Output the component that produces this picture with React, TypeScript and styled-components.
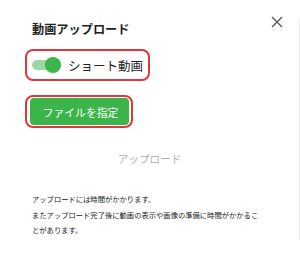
import React from 'react'
import styled, { createGlobalStyle } from 'styled-components'

const GlobalStyle = createGlobalStyle`
    html, body {
        margin: 0;
        padding: 0;
        background: #ffffff;
    }
    body {
        font-family: "Noto Sans CJK JP", "Noto Sans", sans-serif;
        color: #222222;
    }
`

const Page = styled.div`
    width: 300px;
    height: 259px;
    background: #ffffff;
    overflow: hidden;
`

const Panel = styled.div`
    box-sizing: border-box;
    margin-top: 18px;
    height: 222px;
    padding: 3px 16px 0 32px;
    border-right: 1px solid #ededed;
`

const Header = styled.div`
    display: flex;
    justify-content: space-between;
    align-items: flex-start;
`

const Title = styled.h2`
    margin: 0;
    font-size: 12.2px;
    line-height: 16px;
    font-weight: 700;
    color: #222222;
`

const CloseButton = styled.button`
    display: flex;
    padding: 0;
    margin-top: -5px;
    border: none;
    background: none;
    cursor: pointer;
`

const Highlight = styled.div<{ $width: number; $top: number }>`
    box-sizing: border-box;
    width: ${p => p.$width}px;
    margin: ${p => p.$top}px 0 0 -7px;
    border: 2px solid #e2363b;
    border-radius: 8px;
    display: flex;
    align-items: center;
`

const ToggleRow = styled.label`
    display: flex;
    align-items: center;
    gap: 10px;
    height: 28px;
    padding-left: 5px;
    font-size: 12.5px;
    color: #222222;
    cursor: pointer;
`

const Track = styled.span<{ $on: boolean }>`
    position: relative;
    display: block;
    width: 26px;
    height: 10px;
    border-radius: 5px;
    background: ${p => (p.$on ? '#9bd8a3' : '#cccccc')};
`

const Knob = styled.span<{ $on: boolean }>`
    position: absolute;
    top: -3px;
    left: ${p => (p.$on ? '13px' : '-2px')};
    width: 16px;
    height: 16px;
    border-radius: 50%;
    background: ${p => (p.$on ? '#3bb54a' : '#f5f5f5')};
`

const FileButton = styled.button`
    margin: 1px 0 1px 3px;
    width: 99px;
    height: 27px;
    border: none;
    border-radius: 4px;
    background: #3bb54a;
    color: #ffffff;
    font-family: "Noto Sans CJK JP", sans-serif;
    font-size: 10.8px;
    padding: 0 0 0 2px;
    cursor: pointer;
`

const UploadLabel = styled.div`
    margin: 23px 0 0 -16px;
    text-align: center;
    font-size: 10.6px;
    line-height: 16px;
    color: #b0b0b0;
`

const Notes = styled.p`
    margin: 25px 0 0;
    width: 232px;
    font-size: 7.3px;
    line-height: 15.5px;
    color: #222222;
`

export default function App() {
    const [shortVideo, setShortVideo] = React.useState(true)

    return (
        <Page>
            <GlobalStyle />
            <Panel>
                <Header>
                    <Title>動画アップロード</Title>
                    <CloseButton aria-label="閉じる">
                        <svg width="12" height="12" viewBox="0 0 12 12">
                            <path d="M1 1 L11 11 M11 1 L1 11" stroke="#555" strokeWidth="1.3" fill="none" />
                        </svg>
                    </CloseButton>
                </Header>
                <Highlight $width={125} $top={12}>
                    <ToggleRow onClick={() => setShortVideo(v => !v)}>
                        <Track $on={shortVideo}>
                            <Knob $on={shortVideo} />
                        </Track>
                        ショート動画
                    </ToggleRow>
                </Highlight>
                <Highlight $width={108} $top={14}>
                    <FileButton>ファイルを指定</FileButton>
                </Highlight>
                <UploadLabel>アップロード</UploadLabel>
                <Notes>
                    アップロードには時間がかかります。
                    <br />
                    またアップロード完了後に動画の表示や画像の準備に時間がかかることがあります。
                </Notes>
            </Panel>
        </Page>
    )
}
